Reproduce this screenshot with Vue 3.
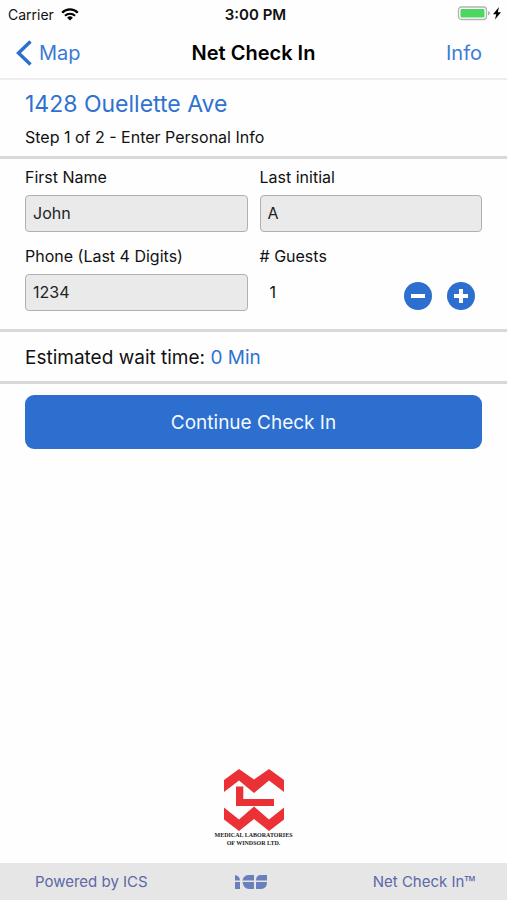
<script setup>
import { ref } from 'vue'

const firstName = ref("John")
const lastInitial = ref("A")
const phone = ref("1234")
const guests = ref(1)
const waitTime = ref(0)

function removeGuest() {
  if (guests.value > 1) {
    guests.value--
  }
}

function addGuest() {
  guests.value++
}
</script>

<template>

  <div class="screen">

    <div class="status-bar">
      <div class="carrier">
        <span>Carrier</span>
        <svg class="wifi" viewBox="0 0 18 13" width="18" height="13" aria-hidden="true">
          <path d="M1.2 4.7a11 11 0 0 1 15.6 0" fill="none" stroke="#000" stroke-width="2.3" />
          <path d="M4 7.8a7.1 7.1 0 0 1 10 0" fill="none" stroke="#000" stroke-width="2.1" />
          <path d="M9 12.6 6.1 9.7a4.1 4.1 0 0 1 5.8 0z" fill="#000" />
        </svg>
      </div>
      <div class="clock">3:00 PM</div>
      <div class="battery">
        <svg viewBox="0 0 46 16" width="46" height="16" aria-hidden="true">
          <rect x="1.500" y="1" width="28" height="12.500" rx="3" fill="#fff" stroke="#b4b4b4" stroke-width="1.300" />
          <rect x="3.500" y="3" width="24" height="8.500" rx="1" fill="#4cd75f" />
          <path d="M31 5q2 .6 2 2.300t-2 2.300z" fill="#b4b4b4" />
          <path d="M42 1 36 8.300h3.200L38 13.500 44 6.200h-3.200z" fill="#000" />
        </svg>
      </div>
    </div>

    <header class="nav-bar">
      <a href="#map" class="back">
        <svg viewBox="0 0 16 26" width="16" height="26" aria-hidden="true">
          <path d="M14.5 1.5 2.5 13l12 11.5" fill="none" stroke="#2c6fce" stroke-width="3.4" />
        </svg>
        <span>Map</span>
      </a>
      <h1>Net Check In</h1>
      <a href="#info" class="info">Info</a>
    </header>

    <section class="location">
      <h2>1428 Ouellette Ave</h2>
      <p>Step 1 of 2 - Enter Personal Info</p>
    </section>

    <form id="check-in" class="fields" @submit.prevent>
      <div class="field">
        <label for="first-name">First Name</label>
        <input id="first-name" v-model="firstName" type="text" />
      </div>
      <div class="field">
        <label for="last-initial">Last initial</label>
        <input id="last-initial" v-model="lastInitial" type="text" />
      </div>
      <div class="field">
        <label for="phone">Phone (Last 4 Digits)</label>
        <input id="phone" v-model="phone" type="text" inputmode="numeric" />
      </div>
      <div class="field">
        <label for="guests"># Guests</label>
        <div class="stepper">
          <output id="guests">{{ guests }}</output>
          <button type="button" aria-label="Remove guest" @click="removeGuest">
            <svg viewBox="0 0 28 28" width="28" height="28" aria-hidden="true">
              <circle cx="14" cy="14" r="14" />
              <path d="M7 14h14" />
            </svg>
          </button>
          <button type="button" aria-label="Add guest" @click="addGuest">
            <svg viewBox="0 0 28 28" width="28" height="28" aria-hidden="true">
              <circle cx="14" cy="14" r="14" />
              <path d="M7 14h14M14 7v14" />
            </svg>
          </button>
        </div>
      </div>
    </form>

    <p class="wait">Estimated wait time: <span>{{ waitTime }} Min</span></p>

    <div class="actions">
      <button type="submit" form="check-in" class="continue">Continue Check In</button>
    </div>

    <div class="lab">
      <svg viewBox="0 0 60 62" width="60" height="62" aria-hidden="true">
        <g fill="#ea3136">
          <path d="M0 11 15 0l15 10.500L45 0l15 11v12L45 11.500 30 24 15 11.500 0 23z" />
          <path d="M12 17.500h7.300V30H50v7H12z" />
          <path d="M0 38.500l15 12 15-13 15 13 15-12v12L45 62 30 50 15 62 0 50.500z" />
        </g>
      </svg>
      <p>MEDICAL LABORATORIES<br />OF WINDSOR LTD.</p>
    </div>

    <footer class="footer">
      <span class="powered">Powered by ICS</span>
      <svg viewBox="0 0 33 14" width="33" height="14" aria-hidden="true">
        <g fill="#6a80bd">
          <path d="M0 0q5 1 5 5.500H0zM0 7h5v7H0z" />
          <path d="M19 0v5.500H7.500Q8.500 0 14 0zM19 14V7H7.500q1 7 6.500 7z" />
          <path d="M32 0v5.500H21Q21 0 26 0zM21 14V7H32q0 7-6 7z" />
        </g>
      </svg>
      <span class="product">Net Check In<span class="tm">™</span></span>
    </footer>

  </div>

</template>

<style>
body {
  margin: 0;
}
</style>

<style scoped>

.screen {
  display: flex;
  flex-direction: column;
  min-height: 100vh;
  background: #fefefe;
  color: #111;
  font-family: Inter, "Liberation Sans", sans-serif;
  font-size: 16px;
}

h1,
h2,
p {
  margin: 0;
}

button {
  font-family: inherit;
  border: none;
  cursor: pointer;
}

.status-bar {
  display: grid;
  grid-template-columns: 1fr auto 1fr;
  align-items: center;
  height: 28px;
  padding: 0 4px 0 8px;
  font-size: 14px;
}

.carrier {
  display: flex;
  align-items: center;
  gap: 7px;
}

.clock {
  font-size: 15px;
  font-weight: 600;
}

.battery {
  display: flex;
  justify-content: flex-end;
}

.nav-bar {
  display: grid;
  grid-template-columns: 1fr auto 1fr;
  align-items: center;
  height: 50px;
  padding: 0 16px;
  border-bottom: 2px solid #ededed;
}

.nav-bar a {
  color: #3a7bd5;
  font-size: 20px;
  text-decoration: none;
}

.back {
  display: flex;
  align-items: center;
  gap: 7px;
}

.nav-bar h1 {
  color: #000;
  font-size: 20px;
  font-weight: 600;
}

.info {
  padding-right: 9px;
  text-align: right;
}

.location {
  padding: 10px 25px 9px;
  border-bottom: 3px solid #d8d8d8;
}

.location h2 {
  color: #2f72d0;
  font-size: 23px;
  line-height: 28px;
  font-weight: 400;
}

.location p {
  margin-top: 9px;
  line-height: 20px;
}

.fields {
  display: grid;
  grid-template-columns: 1fr 1fr;
  gap: 14px 12px;
  padding: 8px 25px 18px;
  border-bottom: 3px solid #d8d8d8;
}

.field {
  display: flex;
  flex-direction: column;
  gap: 8px;
  min-width: 0;
}

.field label {
  line-height: 20px;
}

.field input {
  box-sizing: border-box;
  width: 100%;
  height: 37px;
  padding: 0 7px 2px;
  border: 1px solid #b0b0b0;
  border-radius: 4px;
  background: #eaeaea;
  color: #222;
  font-family: inherit;
  font-size: 16px;
}

.stepper {
  display: flex;
  align-items: flex-start;
  gap: 15px;
  padding: 0 7px 0 10px;
}

.stepper output {
  flex: 1;
  line-height: 37px;
}

.stepper button {
  display: flex;
  margin-top: 8px;
  padding: 0;
  border-radius: 50%;
  background: none;
}

.stepper circle {
  fill: #2c6fce;
}

.stepper path {
  stroke: #fff;
  stroke-width: 4;
}

.wait {
  padding: 14px 25px 11px;
  border-bottom: 3px solid #d8d8d8;
  font-size: 19px;
  line-height: 24px;
}

.wait span {
  color: #2f72d0;
}

.actions {
  padding: 11px 25px;
}

.continue {
  width: 100%;
  height: 54px;
  border-radius: 9px;
  background: #2c6fce;
  color: #f4f8ff;
  font-size: 19px;
}

.lab {
  display: flex;
  flex-direction: column;
  align-items: center;
  margin-top: auto;
  padding-bottom: 16px;
}

.lab p {
  color: #222;
  font-family: "Liberation Serif", serif;
  font-size: 6px;
  line-height: 8px;
  font-weight: 700;
  text-align: center;
}

.footer {
  display: grid;
  grid-template-columns: 1fr auto 1fr;
  align-items: center;
  height: 37px;
  padding: 0 31px 0 27px;
  background: #e6e6e6;
  color: #5c68a8;
  font-size: 15px;
}

.powered {
  padding-left: 8px;
}

.product {
  text-align: right;
}

.tm {
  font-family: "Noto Sans", sans-serif;
  line-height: 1;
}

</style>
